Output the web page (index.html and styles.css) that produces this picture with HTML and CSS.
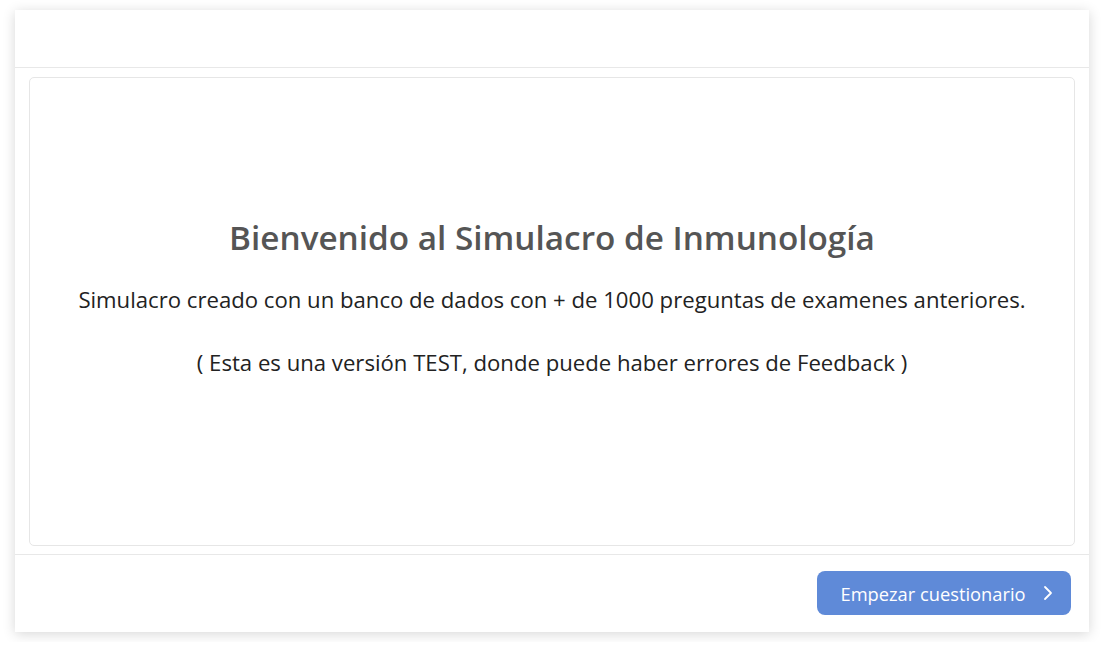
FILE: index.html
```html
<!DOCTYPE html>
<html lang="es">
<head>
<meta charset="utf-8">
<title>Simulacro</title>
<link rel="stylesheet" href="styles.css">
</head>
<body>
<div class="card">
  <div class="card-header"></div>
  <div class="card-body">
    <div class="intro">
      <h1 class="title">Bienvenido al Simulacro de Inmunología</h1>
      <p class="text">Simulacro creado con un banco de dados con + de 1000 preguntas de examenes anteriores.</p>
      <p class="text">( Esta es una versión TEST, donde puede haber errores de Feedback )</p>
    </div>
  </div>
  <div class="card-footer">
    <button class="btn">Empezar cuestionario
      <svg class="chev" width="10" height="16" viewBox="0 0 10 16"><path d="M2 2 L8 8 L2 14" fill="none" stroke="#fff" stroke-width="1.8" stroke-linecap="round" stroke-linejoin="round"/></svg>
    </button>
  </div>
</div>
</body>
</html>
```
FILE: styles.css
```css
html, body {
  margin: 0;
  background: #fff;
}
body {
  padding: 10px 15px;
  font-family: "Open Sans", "Noto Sans", sans-serif;
}
.card {
  width: 1074px;
  height: 622px;
  background: #fff;
  box-shadow: 0 2px 12px rgba(0,0,0,0.16);
  display: flex;
  flex-direction: column;
}
.card-header {
  height: 57px;
  border-bottom: 1px solid #e8e8e8;
  flex: none;
}
.card-body {
  height: 487px;
  padding: 9px 14px 8px 14px;
  box-sizing: border-box;
  border-bottom: 1px solid #e8e8e8;
  flex: none;
}
.intro {
  height: 100%;
  box-sizing: border-box;
  border: 1px solid #e6e6e6;
  border-radius: 5px;
  display: flex;
  flex-direction: column;
  align-items: center;
  padding-top: 137px;
}
.title {
  margin: 0;
  font-size: 33.3px;
  font-weight: 600;
  color: #555;
  line-height: 44px;
}
.text {
  margin: 0;
  font-size: 22.15px;
  color: #222;
  line-height: 30px;
  margin-top: 25px;
}
.text + .text {
  margin-top: 33px;
}
.card-footer {
  flex: 1;
  display: flex;
  justify-content: flex-end;
  align-items: flex-start;
  padding: 16px 18px 0 0;
}
.btn {
  width: 254px;
  height: 44px;
  border: none;
  border-radius: 8px;
  background: #5f8ad8;
  color: #fff;
  font-family: "Open Sans", "Noto Sans", sans-serif;
  font-size: 18.3px;
  display: flex;
  align-items: center;
  justify-content: center;
  gap: 17px;
  padding: 0 0 0 5px;
}
.chev {
  display: block;
}
```
